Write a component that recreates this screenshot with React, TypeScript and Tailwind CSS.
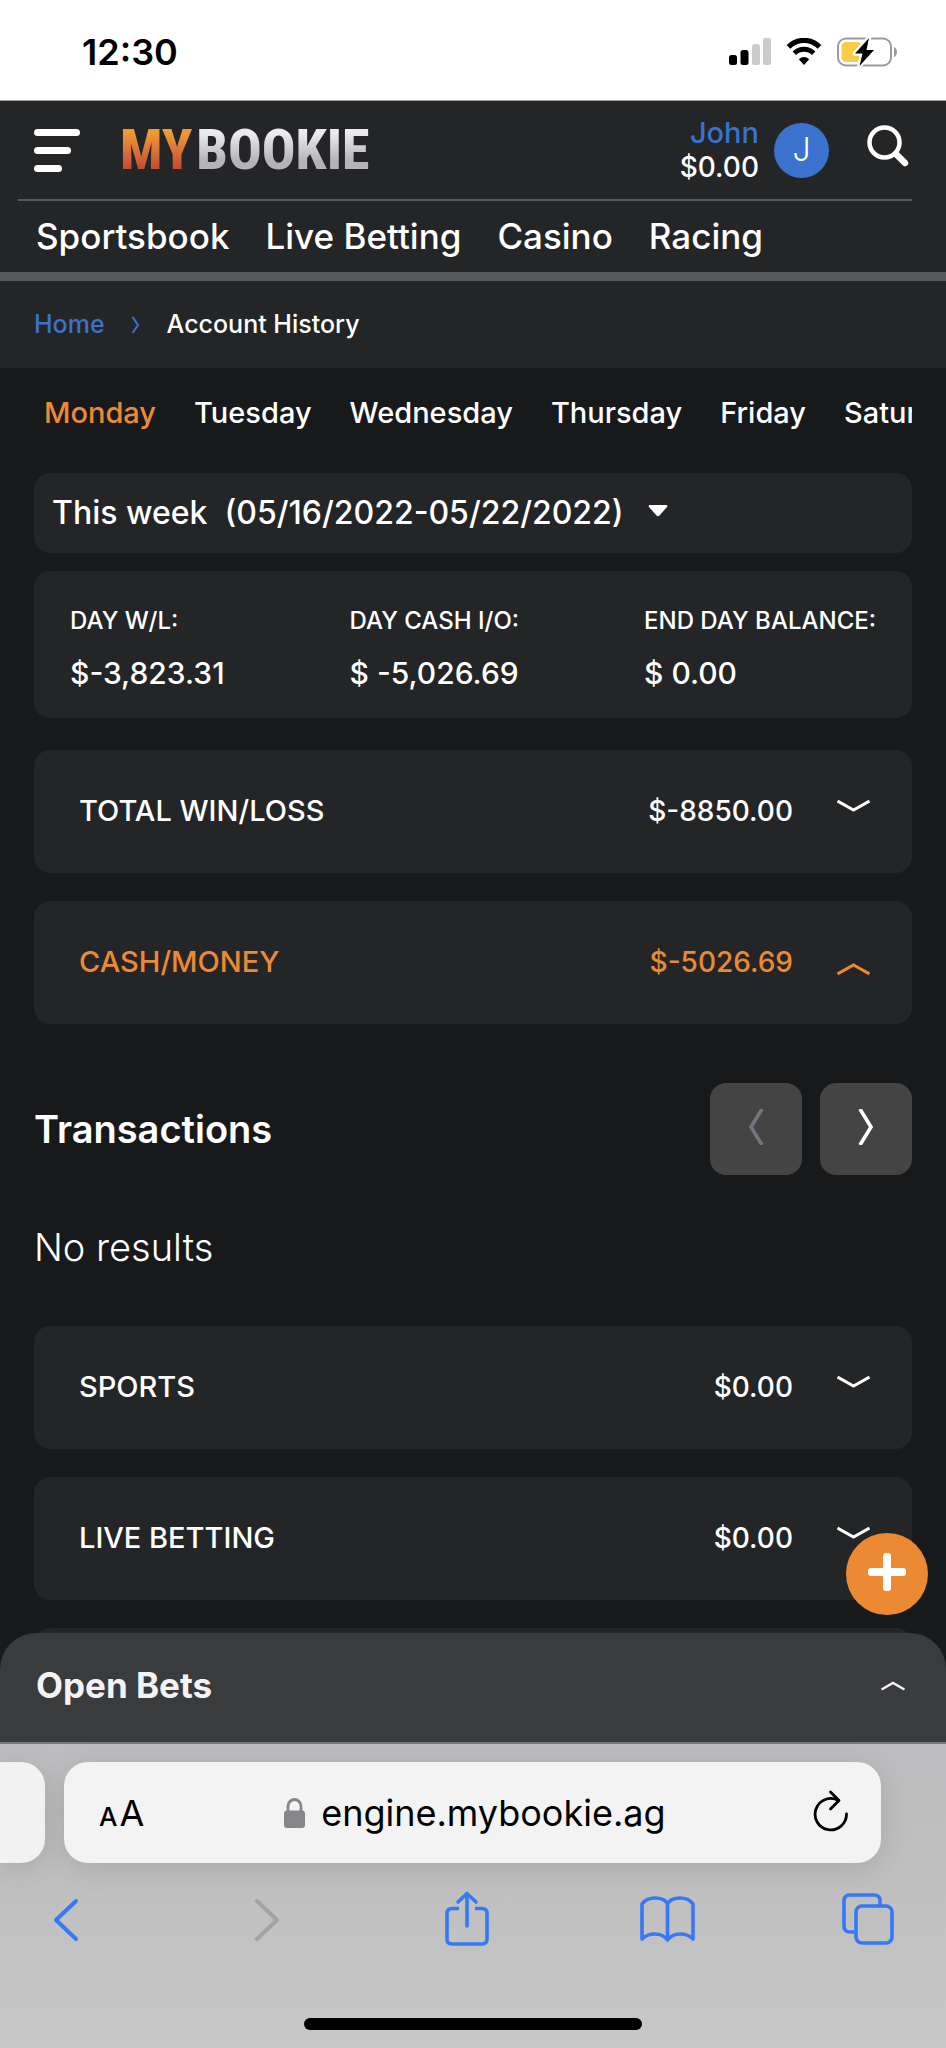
import { useState } from 'react'

const navLinks = ['Sportsbook', 'Live Betting', 'Casino', 'Racing']
const days = ['Monday', 'Tuesday', 'Wednesday', 'Thursday', 'Friday', 'Saturday']

const stats = [
    { label: 'DAY W/L:', value: '$-3,823.31' },
    { label: 'DAY CASH I/O:', value: '$ -5,026.69' },
    { label: 'END DAY BALANCE:', value: '$ 0.00' },
]

function StatusBar() {
    return (
        <div className="flex h-[101px] shrink-0 items-center justify-between border-b border-[#a0a0a0] bg-white pt-1 pr-[48px] pl-[82px] text-black">
            <div className="text-4xl font-semibold">12:30</div>
            <div className="flex items-center gap-[15px]">
                <svg width="42" height="28" viewBox="0 0 42 28">
                    <rect x="0" y="17" width="8" height="10" rx="2.5" />
                    <rect x="11.500" y="12" width="8" height="15" rx="2.5" />
                    <rect x="23" y="6" width="8" height="21" rx="2.5" fill="#cbcbcb" />
                    <rect x="34" y="0" width="8" height="27" rx="2.5" fill="#cbcbcb" />
                </svg>
                <svg width="36" height="28" viewBox="0 0 36 28">
                    <path d="M2.500 8.800 A22 22 0 0 1 33.500 8.800" fill="none" stroke="#000" strokeWidth="5.200" />
                    <path d="M8.300 15.200 A13.800 13.800 0 0 1 27.700 15.200" fill="none" stroke="#000" strokeWidth="5" />
                    <path d="M12.800 21.300 Q18 16.800 23.200 21.300 L18 27 Z" />
                </svg>
                <svg width="61" height="30" viewBox="0 0 61 30">
                    <rect x="1" y="1.500" width="53" height="27" rx="8" fill="none" stroke="#9b9b9b" strokeWidth="2" />
                    <path d="M57 10 Q60 11.500 60 15 Q60 18.500 57 20 Z" fill="#9b9b9b" />
                    <rect x="4.500" y="5" width="20" height="20" rx="4.500" fill="#f5cd46" />
                    <path d="M32 1 L18 16.500 H25.500 L22.500 29 L37 13 H29.500 Z" stroke="#fff" strokeWidth="4.500" strokeLinejoin="round" />
                    <path d="M32 1 L18 16.500 H25.500 L22.500 29 L37 13 H29.500 Z" />
                </svg>
            </div>
        </div>
    )
}

function Header() {
    return (
        <header className="shrink-0 border-b-[9px] border-[#58595b] bg-[#242527]">
            <div className="ml-[18px] mr-[34px] flex h-[100px] items-center border-b-2 border-[#58595b] pr-[3px] pl-4">
                <button aria-label="Menu" className="flex flex-col gap-[11px]">
                    <span className="h-[7px] w-[46px] rounded-full bg-white" />
                    <span className="h-[7px] w-[37px] rounded-full bg-white" />
                    <span className="h-[7px] w-[28px] rounded-full bg-white" />
                </button>
                <a href="#" className="ml-10 flex gap-1 font-['Roboto_Condensed','Liberation_Sans_Narrow',sans-serif] text-[56px] leading-none font-extrabold">
                    <span className="bg-linear-to-b from-[#ee9a35] from-20% to-[#c44f35] to-80% bg-clip-text text-transparent">MY</span>
                    <span className="bg-linear-to-b from-[#ececee] from-20% to-[#b4b4b7] to-70% bg-clip-text text-transparent">BOOKIE</span>
                </a>
                <div className="ml-auto text-right font-medium">
                    <div className="text-[29px] leading-[34px] text-[#3a72cd]">John</div>
                    <div className="text-[28px] leading-[34px]">$0.00</div>
                </div>
                <div className="ml-[15px] flex h-[55px] w-[55px] items-center justify-center rounded-full bg-[#3a72cd] text-[32px] font-light">J</div>
                <button aria-label="Search" className="ml-[38px] pb-2">
                    <svg width="42" height="42" viewBox="0 0 42 42" fill="none" stroke="#fff">
                        <circle cx="17.500" cy="17.500" r="15" strokeWidth="4.500" />
                        <path d="M29 29 L38 38" strokeWidth="6.500" strokeLinecap="round" />
                    </svg>
                </button>
            </div>
            <nav className="flex h-[71px] items-center gap-[36px] pl-[36px] text-[35px] font-medium">
                {navLinks.map((item) => <a key={item} href="#">{item}</a>)}
            </nav>
        </header>
    )
}

function Chevron({ open = false }) {
    return (
        <svg width="33" height="26" viewBox="0 0 33 26" className={open ? 'rotate-180' : ''} fill="none" stroke="currentColor" strokeWidth="3">
            <path d="M0.500 2 L16.500 11 L32.500 2" />
        </svg>
    )
}

function Row({ title, amount, open = false }) {
    return (
        <button className={`flex h-[123px] w-full shrink-0 items-center rounded-2xl bg-[#242527] pr-[42px] pl-[45px] font-medium ${open ? 'text-[#ec8a33]' : 'text-white'}`}>
            <span className="pb-0.5 text-[29px]">{title}</span>
            <span className="mr-[44px] ml-auto pb-0.5 text-[28px]">{amount}</span>
            <Chevron open={open} />
        </button>
    )
}

function BrowserBar() {
    return (
        <div className="flex flex-col border-t-2 border-[#77787a] bg-linear-to-b from-[#bdbdbf] via-[#c0c0c0] to-[#c7c7c8] pt-[18px] text-black">
            <div className="flex gap-[19px]">
                <div className="h-[101px] w-[45px] rounded-r-3xl bg-[#f2f2f3] shadow-[0_6px_30px_rgba(0,0,0,0.12)]" />
                <div className="mr-[65px] flex h-[101px] flex-1 items-center rounded-3xl bg-[#f3f3f4] pr-[32px] pl-[35px] shadow-[0_6px_30px_rgba(0,0,0,0.12)]">
                    <button aria-label="Text size" className="flex items-baseline gap-[2px] pt-1">
                        <span className="text-[26px] font-medium">A</span>
                        <span className="text-4xl">A</span>
                    </button>
                    <div className="flex flex-1 items-center justify-center gap-4">
                        <svg width="21" height="30" viewBox="0 0 21 30">
                            <rect x="0" y="12.500" width="21" height="17.500" rx="3" fill="#86868a" />
                            <path d="M4 13 V8.500 A6.500 7 0 0 1 17 8.500 V13" fill="none" stroke="#86868a" strokeWidth="2.800" />
                        </svg>
                        <input aria-label="Address" className="h-12 w-[352px] bg-transparent text-4xl leading-[48px] outline-none" defaultValue="engine.mybookie.ag" />
                    </div>
                    <button aria-label="Reload" className="pb-1">
                        <svg width="36" height="42" viewBox="0 0 36 42" fill="none" stroke="#000" strokeWidth="2.800" strokeLinecap="round" strokeLinejoin="round">
                            <path d="M33.500 24 A15.700 15.700 0 1 1 25.500 10.500" />
                            <path d="M17.500 2 L26 10.500 L17.500 19" />
                        </svg>
                    </button>
                </div>
            </div>
            <div className="mt-[28px] flex items-center justify-between pr-[50px] pl-[38px]">
                <button aria-label="Back" className="flex w-14 justify-center">
                    <svg width="26" height="56" viewBox="0 0 26 56" fill="none" stroke="#3579f6" strokeWidth="4" strokeLinecap="round" strokeLinejoin="round">
                        <path d="M23 10 L3 29 L23 48" />
                    </svg>
                </button>
                <button aria-label="Forward" className="flex w-14 justify-center">
                    <svg width="26" height="56" viewBox="0 0 26 56" fill="none" stroke="#a3a3a5" strokeWidth="4" strokeLinecap="round" strokeLinejoin="round">
                        <path d="M3 10 L23 29 L3 48" />
                    </svg>
                </button>
                <button aria-label="Share" className="flex w-14 justify-center">
                    <svg width="44" height="56" viewBox="0 0 44 56" fill="none" stroke="#3579f6" strokeWidth="3.600" strokeLinejoin="round">
                        <path d="M14 17.500 H7 Q2 17.500 2 22.500 V48 Q2 53 7 53 H37 Q42 53 42 48 V22.500 Q42 17.500 37 17.500 H30" />
                        <path d="M22 35 V3 M13 11 L22 2.500 L31 11" strokeLinecap="round" />
                    </svg>
                </button>
                <button aria-label="Bookmarks" className="flex w-14 justify-center">
                    <svg width="55" height="46" viewBox="0 0 55 46" fill="none" stroke="#3579f6" strokeWidth="3.600" strokeLinejoin="round">
                        <path d="M27.500 7.500 Q24 2 15 2 Q6 2 2 8 V43 Q7 38 15 38 Q23 38 27.500 44 Q32 38 40 38 Q48 38 53 43 V8 Q49 2 40 2 Q31 2 27.500 7.500 Z" />
                        <path d="M27.500 7.500 V44" />
                    </svg>
                </button>
                <button aria-label="Tabs" className="flex w-14 justify-center">
                    <svg width="52" height="52" viewBox="0 0 52 52" fill="none" stroke="#3579f6" strokeWidth="3.600">
                        <path d="M12 39 H8 Q2 39 2 33 V8 Q2 2 8 2 H32 Q38 2 38 8 V12" />
                        <rect x="14" y="13" width="36" height="37" rx="6" />
                    </svg>
                </button>
            </div>
            <div className="mt-[71px] mb-[18px] h-[12px] w-[338px] self-center rounded-full bg-black" />
        </div>
    )
}

export default function App() {

    const [activeDay, setActiveDay] = useState('Monday')

    return (
        <div className="flex h-screen flex-col overflow-hidden bg-[#18191b] font-['Inter',sans-serif] text-white">
            <StatusBar />
            <Header />

            {/* breadcrumb */}
            <div className="flex h-[87px] shrink-0 items-center bg-[#242527] pl-[34px] text-[25px] font-medium">
                <a href="#" className="text-[#3a72cd]">Home</a>
                <svg width="9" height="18" viewBox="0 0 9 18" className="mr-[27px] ml-[26px]" fill="none" stroke="#3a72cd" strokeWidth="2">
                    <path d="M1.500 1 L7 9 L1.500 17" />
                </svg>
                <span>Account History</span>
            </div>

            <main className="flex min-h-0 flex-1 flex-col overflow-hidden px-[34px]">
                <div className="flex h-[90px] shrink-0 items-center gap-[38px] overflow-hidden pl-[10px] text-[29px] font-medium">
                    {days.map((day) => (
                        <button key={day} onClick={() => setActiveDay(day)} className={activeDay === day ? 'text-[#ec8a33]' : 'text-white'}>{day}</button>
                    ))}
                </div>

                <div className="mt-[15px] flex h-[80px] shrink-0 items-center rounded-2xl bg-[#242527] pl-[18px]">
                    <select aria-label="Week" className="appearance-none bg-transparent text-[32px] font-medium outline-none">
                        <option>This week{'\u00a0\u00a0'}(05/16/2022-05/22/2022)</option>
                    </select>
                    <svg width="20" height="12" viewBox="0 0 20 12" className="mb-1 ml-6" fill="#fff">
                        <path d="M1.500 0 H18.500 Q20 0.500 19 2 L11.500 10.500 Q10 12 8.500 10.500 L1 2 Q0 0.500 1.500 0 Z" />
                    </svg>
                </div>

                {/* day totals */}
                <div className="mt-[18px] flex h-[147px] shrink-0 items-center justify-between rounded-2xl bg-[#242527] px-[36px] pt-2">
                    {stats.map((stat) => (
                        <div key={stat.label}>
                            <div className="text-2xl font-medium">{stat.label}</div>
                            <div className="mt-4 text-[30px] leading-[40px] font-medium">{stat.value}</div>
                        </div>
                    ))}
                </div>

                <div className="mt-8 flex shrink-0 flex-col gap-7">
                    <Row title="TOTAL WIN/LOSS" amount="$-8850.00" />
                    <Row title="CASH/MONEY" amount="$-5026.69" open />
                </div>

                {/* transactions */}
                <div className="mt-[59px] flex shrink-0 items-center gap-[18px]">
                    <h2 className="mr-auto text-[38px] font-semibold">Transactions</h2>
                    <button aria-label="Previous" disabled className="flex h-[92px] w-[92px] items-center justify-center rounded-2xl bg-[#444444] pb-1 text-[#70767c]">
                        <svg width="16" height="36" viewBox="0 0 16 36" fill="none" stroke="currentColor" strokeWidth="3.600"><path d="M14 0 L3 18 L14 36" /></svg>
                    </button>
                    <button aria-label="Next" className="flex h-[92px] w-[92px] items-center justify-center rounded-2xl bg-[#444444] pb-1">
                        <svg width="16" height="36" viewBox="0 0 16 36" fill="none" stroke="currentColor" strokeWidth="3.600"><path d="M2 0 L13 18 L2 36" /></svg>
                    </button>
                </div>
                <p className="mt-[52px] shrink-0 text-[38px] leading-[40px] font-light">No results</p>

                <div className="mt-[59px] flex shrink-0 flex-col gap-7">
                    <Row title="SPORTS" amount="$0.00" />
                    <Row title="LIVE BETTING" amount="$0.00" />
                    <div className="h-[123px] rounded-2xl bg-[#242527]" />
                </div>
            </main>

            <footer className="relative -mt-9 shrink-0">
                <button aria-label="Add" className="absolute right-[18px] bottom-full mb-[18px] flex h-[82px] w-[82px] items-center justify-center rounded-full bg-[#ec8a33] pb-1">
                    <svg width="38" height="38" viewBox="0 0 38 38" fill="#fff">
                        <rect x="0" y="15" width="38" height="8" rx="3" />
                        <rect x="15" y="0" width="8" height="38" rx="3" />
                    </svg>
                </button>
                <button className="flex h-[109px] w-full items-center justify-between rounded-t-[36px] bg-[#3a3b3d] pr-[41px] pb-1 pl-[36px] text-[35px] font-bold text-[#f3f3f5]">
                    Open Bets
                    <svg width="24" height="10" viewBox="0 0 24 10" fill="none" stroke="currentColor" strokeWidth="2.400"><path d="M0.500 8.500 L12 2 L23.500 8.500" /></svg>
                </button>
                <BrowserBar />
            </footer>
        </div>
    )
}
